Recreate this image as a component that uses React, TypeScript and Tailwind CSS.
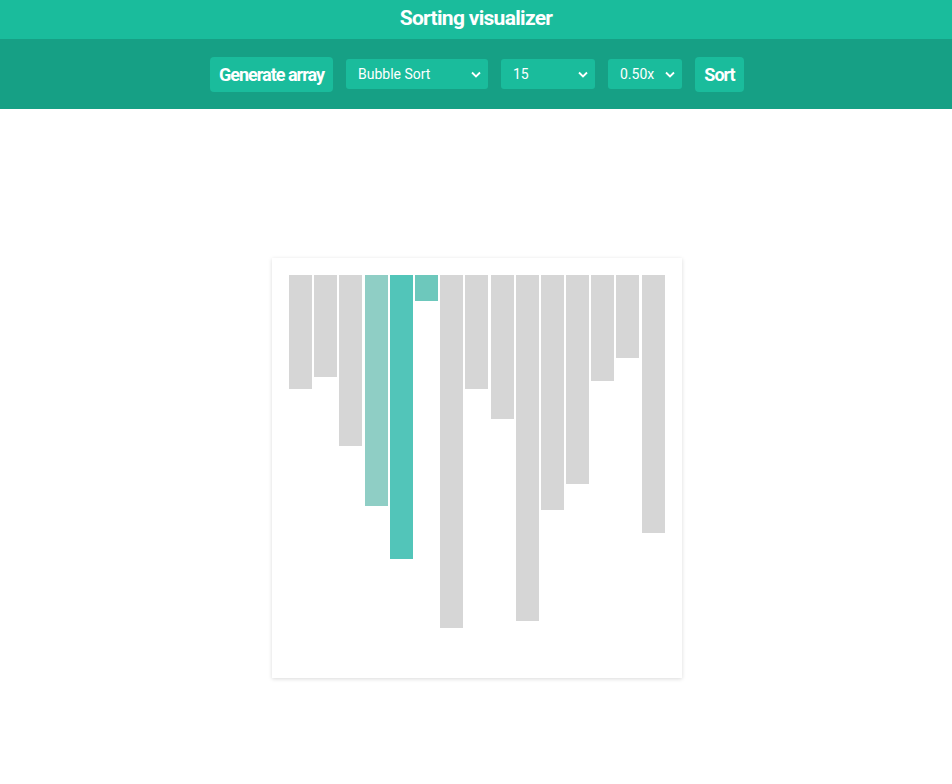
import React from "react";

const bars = [
  { h: 114, c: "bg-[#d6d6d6]" },
  { h: 102, c: "bg-[#d6d6d6]" },
  { h: 171, c: "bg-[#d6d6d6]" },
  { h: 231, c: "bg-[#8fcec5]" },
  { h: 284, c: "bg-[#52c5b9]" },
  { h: 26, c: "bg-[#6dc8bc]" },
  { h: 353, c: "bg-[#d6d6d6]" },
  { h: 114, c: "bg-[#d6d6d6]" },
  { h: 144, c: "bg-[#d6d6d6]" },
  { h: 346, c: "bg-[#d6d6d6]" },
  { h: 235, c: "bg-[#d6d6d6]" },
  { h: 209, c: "bg-[#d6d6d6]" },
  { h: 106, c: "bg-[#d6d6d6]" },
  { h: 83, c: "bg-[#d6d6d6]" },
  { h: 258, c: "bg-[#d6d6d6]" },
];

function Chevron() {
  return (
    <svg width="10" height="7" viewBox="0 0 10 7" className="pointer-events-none">
      <path d="M1 1.5 L5 5.5 L9 1.5" fill="none" stroke="white" strokeWidth="1.8" />
    </svg>
  );
}

function Select({ label, w }: { label: string; w: string }) {
  return (
    <div className={`${w} h-[30px] rounded-[3px] bg-[#1abc9c] flex items-center justify-between pl-[12px] pr-[7px] pt-[1px] text-[14px] text-white`}>
      <span>{label}</span>
      <Chevron />
    </div>
  );
}

export default function App() {
  return (
    <div className="min-h-[784px] bg-white" style={{ fontFamily: "Roboto, 'Liberation Sans', sans-serif" }}>
      <div className="h-[39px] bg-[#1abc9c] flex items-center justify-center pb-[1px] text-white font-bold text-[21px] tracking-[-0.7px]">
        Sorting visualizer
      </div>
      <div className="h-[70px] bg-[#16a085] flex items-center justify-center gap-[13px] pl-[2px]">
        <button className="h-[35px] w-[123px] whitespace-nowrap rounded-[4px] bg-[#1abc9c] text-white font-bold text-[18px] tracking-[-1px]">
          Generate array
        </button>
        <Select label="Bubble Sort" w="w-[142px]" />
        <Select label="15" w="w-[94px]" />
        <Select label="0.50x" w="w-[74px]" />
        <button className="h-[35px] w-[49px] whitespace-nowrap rounded-[4px] bg-[#1abc9c] text-white font-bold text-[18px] tracking-[-1px]">
          Sort
        </button>
      </div>
      <div className="flex justify-center pt-[149px] pl-[2px]">
        <div className="w-[410px] h-[420px] bg-white shadow-[0_1px_4px_rgba(0,0,0,0.15)] p-[17px] flex gap-[2.2px] items-start">
          {bars.map((b, i) => (
            <div key={i} className={`w-[23px] shrink-0 ${b.c}`} style={{ height: b.h }} />
          ))}
        </div>
      </div>
    </div>
  );
}
